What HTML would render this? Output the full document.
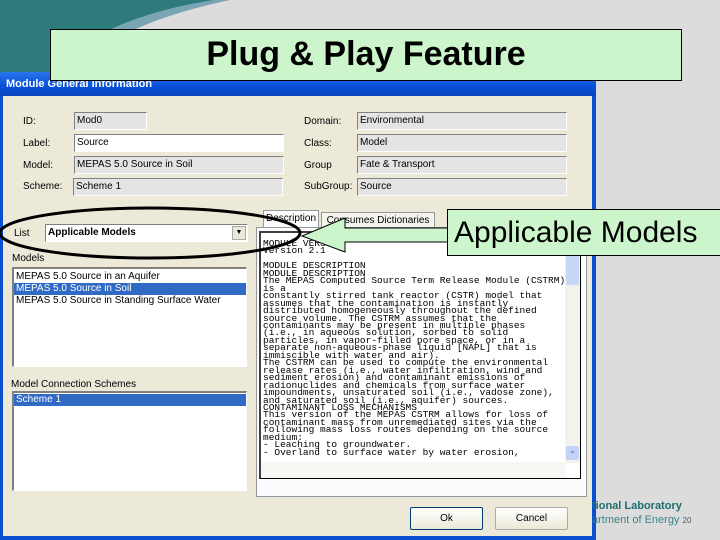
<!DOCTYPE html>
<html><head><meta charset="utf-8"><style>
*{margin:0;padding:0;box-sizing:border-box}
body{width:720px;height:540px;overflow:hidden;background:#dcdcdc;position:relative;font-family:"Liberation Sans",sans-serif}
.a{position:absolute}
.lbl{position:absolute;font-size:10px;color:#000}
.box{position:absolute;height:18px;border:1px solid #fff;border-top-color:#808080;border-left-color:#808080;background:#e4e4e4;font-size:10px;padding:2px 2px;line-height:12px}
.w{background:#fff}
.lst{position:absolute;background:#fff;border:1px solid #fff;border-top:2px solid #808080;border-left:2px solid #808080;font-size:10px;line-height:12px}
.sel{background:#316ac5;color:#fff}
pre{font-family:"Liberation Mono",monospace;font-size:9.5px;line-height:7.45px;letter-spacing:0}
.btn{position:absolute;height:23px;border:1px solid #003c74;border-radius:2px;background:linear-gradient(#fff,#ece9d8);font-size:10px;text-align:center;line-height:21px}
</style></head><body>
<svg class="a" style="left:0;top:0" width="260" height="100"><path d="M0 0H215C150 10 90 30 50 72H0Z" fill="#2e7b7b"/><path d="M215 0C150 10 90 30 50 72H70C110 35 160 15 230 0Z" fill="#7aa4b4"/></svg>
<div class="a" style="left:0;top:72px;width:596px;height:468px;background:#0a4fd0"></div>
<div class="a" style="left:0;top:72px;width:596px;height:24px;background:linear-gradient(#2a74ee,#0850d8 60%,#0846c0)"></div>
<div class="a" style="left:6px;top:78px;color:#fff;font-weight:bold;font-size:11px">Module General Information</div>
<div class="a" style="left:3px;top:96px;width:589px;height:440px;background:#ece9d8"></div>
<div class="lbl" style="left:23px;top:116px">ID:</div>
<div class="lbl" style="left:23px;top:138px">Label:</div>
<div class="lbl" style="left:23px;top:160px">Model:</div>
<div class="lbl" style="left:23px;top:181px">Scheme:</div>
<div class="box" style="left:74px;top:112px;width:73px">Mod0</div>
<div class="box w" style="left:74px;top:134px;width:210px">Source</div>
<div class="box" style="left:74px;top:156px;width:210px">MEPAS 5.0 Source in Soil</div>
<div class="box" style="left:73px;top:178px;width:210px">Scheme 1</div>
<div class="lbl" style="left:304px;top:116px">Domain:</div>
<div class="lbl" style="left:304px;top:138px">Class:</div>
<div class="lbl" style="left:304px;top:160px">Group</div>
<div class="lbl" style="left:304px;top:181px">SubGroup:</div>
<div class="box" style="left:357px;top:112px;width:210px">Environmental</div>
<div class="box" style="left:357px;top:134px;width:210px">Model</div>
<div class="box" style="left:357px;top:156px;width:210px">Fate &amp; Transport</div>
<div class="box" style="left:357px;top:178px;width:210px">Source</div>
<div class="lbl" style="left:14px;top:228px">List</div>
<div class="box w" style="left:45px;top:224px;width:203px;font-weight:bold">Applicable Models<div class="a" style="right:1px;top:1px;width:14px;height:14px;background:#ece9d8;border:1px solid #aaa;font-size:7px;line-height:12px;text-align:center">▼</div></div>
<div class="lbl" style="left:12px;top:253px">Models</div>
<div class="lst" style="left:12px;top:267px;width:235px;height:100px;padding-top:2px"><div style="padding-left:2px">MEPAS 5.0 Source in an Aquifer</div><div class="sel" style="padding-left:2px">MEPAS 5.0 Source in Soil</div><div style="padding-left:2px">MEPAS 5.0 Source in Standing Surface Water</div></div>
<div class="lbl" style="left:11px;top:379px">Model Connection Schemes</div>
<div class="lst" style="left:12px;top:391px;width:235px;height:100px;padding-top:1px"><div class="sel" style="padding-left:2px">Scheme 1</div></div>
<div class="a" style="left:263px;top:210px;width:56px;height:18px;border:1px solid #919b9c;border-bottom:none;background:#fcfcfe;font-size:10px;text-align:center;line-height:16px">Description</div>
<div class="a" style="left:321px;top:212px;width:114px;height:16px;border:1px solid #919b9c;border-bottom:none;background:#f4f3ee;font-size:10px;text-align:center;line-height:15px">Consumes Dictionaries</div>
<div class="a" style="left:256px;top:227px;width:331px;height:270px;border:1px solid #919b9c;background:#fcfcfe"></div>
<div class="a" style="left:259px;top:231px;width:322px;height:248px;border:1px solid #000;border-top:2px solid #404040;border-left:2px solid #404040;background:#fff;overflow:hidden">
<pre style="position:absolute;left:2px;top:7px">MODULE VERSION
Version 2.1

MODULE DESCRIPTION
MODULE DESCRIPTION
The MEPAS Computed Source Term Release Module (CSTRM)
is a
constantly stirred tank reactor (CSTR) model that
assumes that the contamination is instantly
distributed homogeneously throughout the defined
source volume. The CSTRM assumes that the
contaminants may be present in multiple phases
(i.e., in aqueous solution, sorbed to solid
particles, in vapor-filled pore space, or in a
separate non-aqueous-phase liquid [NAPL] that is
immiscible with water and air).
The CSTRM can be used to compute the environmental
release rates (i.e., water infiltration, wind and
sediment erosion) and contaminant emissions of
radionuclides and chemicals from surface water
impoundments, unsaturated soil (i.e., vadose zone),
and saturated soil (i.e., aquifer) sources.
CONTAMINANT LOSS MECHANISMS
This version of the MEPAS CSTRM allows for loss of
contaminant mass from unremediated sites via the
following mass loss routes depending on the source
medium:
- Leaching to groundwater.
- Overland to surface water by water erosion,</pre>
<div class="a" style="right:0;top:0;width:15px;height:230px;background:#f3f3ee"><div class="a" style="left:1px;top:22px;width:13px;height:30px;background:#c8d6f8;border-radius:2px"></div><div class="a" style="left:1px;top:213px;width:13px;height:14px;background:#c4d3f5;border-radius:2px;font-size:8px;color:#4d6185;text-align:center">⌄</div></div>
<div class="a" style="left:0;bottom:0;width:305px;height:16px;background:#f7f7f3"></div>
</div>
<div class="btn" style="left:410px;top:507px;width:73px">Ok</div>
<div class="btn" style="left:495px;top:507px;width:73px;border-color:#aaa">Cancel</div>
<div class="a" style="left:592px;top:500px;font-size:11px;font-weight:bold;color:#1f6d6d;white-space:nowrap">tional Laboratory</div>
<div class="a" style="left:592px;top:514px;font-size:11px;color:#3a8585;white-space:nowrap">artment of Energy <span style="font-size:8px;color:#555">20</span></div>
<div class="a" style="left:50px;top:29px;width:632px;height:52px;background:#ccf5cc;border:1px solid #000;text-align:center;font-size:34px;font-weight:bold;line-height:48px">Plug &amp; Play Feature</div>
<svg class="a" style="left:0;top:0" width="720" height="540">
<ellipse cx="150" cy="233" rx="150" ry="25" fill="none" stroke="#000" stroke-width="3"/>
<path d="M449 228H345V218L302 236L345 252V242H449Z" fill="#ccf5cc" stroke="#000" stroke-width="1"/>
</svg>
<div class="a" style="left:447px;top:209px;width:280px;height:47px;background:#ccf5cc;border:1px solid #000;font-size:30px;line-height:46px;padding-left:6px;white-space:nowrap;overflow:hidden">Applicable Models</div>
</body></html>
